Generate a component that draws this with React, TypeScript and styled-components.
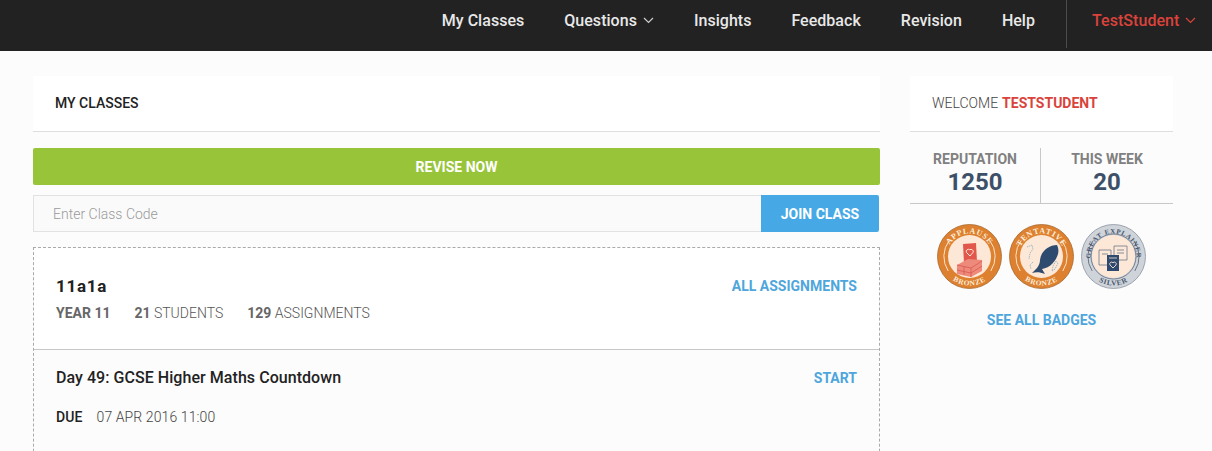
import React from "react";
import styled, { createGlobalStyle } from "styled-components";

const Global = createGlobalStyle`
  html, body { margin: 0; padding: 0; background: #fcfcfc; height: 451px; overflow: hidden; }
  body { font-family: Roboto, "Liberation Sans", sans-serif; color: #222; }
  * { box-sizing: border-box; }
`;

const NavBar = styled.header`
  height: 51px;
  background: #222222;
  display: flex;
  justify-content: flex-end;
  align-items: stretch;
  padding-bottom: 3px;
`;
const NavLinks = styled.nav`
  display: flex;
  align-items: center;
  gap: 40px;
  padding: 0 31px 8px 0;
`;
const NavLink = styled.a`
  font-size: 16px;
  font-weight: 500;
  letter-spacing: 0.03px;
  color: #e8e8e8;
  display: flex;
  align-items: center;
  gap: 6px;
`;
const UserMenu = styled.a`
  border-left: 1px solid #4c4c4c;
  width: 146px;
  padding: 0 0 8px 25px;
  display: flex;
  align-items: center;
  gap: 6px;
  font-size: 16px;
  font-weight: 500;
  letter-spacing: 0.05px;
  color: #d9433b;
`;
const Main = styled.main`
  display: flex;
  align-items: flex-start;
  gap: 30px;
  padding: 25px 39px 0 33px;
`;
const LeftColumn = styled.section`
  width: 847px;
  flex: none;
`;
const RightColumn = styled.aside`
  width: 263px;
  flex: none;
`;
const PanelHead = styled.div`
  height: 56px;
  background: #fff;
  border-bottom: 1px solid #dedede;
  display: flex;
  align-items: center;
  padding: 0 22px 1px;
  font-size: 14px;
  font-weight: 500;
  color: #222;
`;
const ReviseButton = styled.button`
  display: block;
  width: 100%;
  height: 37px;
  margin-top: 16px;
  border: 0;
  border-radius: 2px;
  background: #98c43a;
  color: #fff;
  font: 700 14px Roboto, sans-serif;
`;
const JoinRow = styled.div`
  display: flex;
  height: 37px;
  margin-top: 10px;
  width: 846px;
`;
const CodeInput = styled.div`
  flex: 1;
  border: 1px solid #e2e2e2;
  border-right: 0;
  background: #fafafa;
  color: #9a9a9a;
  font-size: 14px;
  font-weight: 300;
  display: flex;
  align-items: center;
  padding-left: 19px;
`;
const JoinButton = styled.button`
  width: 118px;
  border: 0;
  border-radius: 0 2px 2px 0;
  background: #46a9e6;
  color: #fff;
  font: 700 14px Roboto, sans-serif;
`;
const ClassBox = styled.div`
  margin-top: 15px;
  height: 240px;
  border: 1px dashed #aaa;
  border-bottom: 0;
`;
const ClassHead = styled.div`
  height: 102px;
  background: #fff;
  border-bottom: 1px solid #c8c8c8;
  padding: 27px 22px 0;
`;
const SpreadRow = styled.div`
  display: flex;
  justify-content: space-between;
  align-items: center;
`;
const ClassName = styled.div`
  font-size: 17px;
  font-weight: 700;
  letter-spacing: 0.7px;
  color: #222;
  line-height: 22px;
`;
const TextLink = styled.a`
  font-size: 14px;
  font-weight: 700;
  color: #4ea6dc;
`;
const MetaRow = styled.div`
  display: flex;
  gap: 24px;
  margin-top: 7px;
  font-size: 14px;
  font-weight: 300;
  color: #555;
  line-height: 18px;
`;
const MetaStrong = styled.strong`
  font-weight: 700;
  color: #666;
`;
const AssignmentRow = styled.div`
  padding: 17px 22px 0;
`;
const AssignmentTitle = styled.div`
  font-size: 16px;
  font-weight: 500;
  letter-spacing: 0.05px;
  color: #222;
  line-height: 22px;
`;
const DueRow = styled.div`
  display: flex;
  gap: 14px;
  margin-top: 19px;
  font-size: 14px;
  font-weight: 300;
  letter-spacing: 0.1px;
  color: #444;
  line-height: 18px;
`;
const DueLabel = styled.strong`
  font-weight: 500;
  color: #222;
`;
const WelcomeHead = styled(PanelHead)`
  font-weight: 300;
  color: #444;
  gap: 4px;
`;
const WelcomeName = styled.strong`
  font-weight: 700;
  color: #d9433b;
`;
const Stats = styled.div`
  display: grid;
  grid-template-columns: 131px 1fr;
  margin-top: 16px;
  border-bottom: 1px solid #c8c8c8;
  height: 56px;
`;
const Stat = styled.div<{ $divided?: boolean }>`
  text-align: center;
  border-right: ${(p) => (p.$divided ? "1px solid #c8c8c8" : "0")};
`;
const StatLabel = styled.div`
  font-size: 14px;
  font-weight: 700;
  color: #808080;
  line-height: 20px;
  margin-top: 1px;
`;
const StatValue = styled.div`
  font-size: 24px;
  font-weight: 700;
  color: #3d5068;
  line-height: 26px;
`;
const Badges = styled.div`
  display: flex;
  gap: 7px;
  margin-top: 20px;
  padding-left: 27px;
`;
const SeeAll = styled(TextLink)`
  display: block;
  text-align: center;
  margin-top: 22px;
  line-height: 18px;
`;
const BadgeText = styled.text<{ $size: number }>`
  font-family: "Liberation Serif", "DejaVu Serif", serif;
  font-weight: 700;
  font-size: ${(p) => p.$size}px;
  letter-spacing: 0.7px;
`;

const Chevron = ({ color }: { color: string }) => (
  <svg width="11" height="7" viewBox="0 0 11 7" fill="none">
    <path d="M1 1l4.500 4.500L10 1" stroke={color} strokeWidth="1.2" />
  </svg>
);

type BadgeProps = {
  id: string;
  ring: string;
  edge: string;
  line: string;
  textColor: string;
  top: string;
  bottom: string;
  topSize?: number;
  children: React.ReactNode;
};

const Badge = ({ id, ring, edge, line, textColor, top, bottom, topSize = 8, children }: BadgeProps) => (
  <svg width="65" height="65" viewBox="0 0 65 65">
    <defs>
      <path id={`${id}-t`} d="M12.600 44a23 23 0 1 1 39.800 0" />
      <path id={`${id}-b`} d="M3.500 32.500a29 29 0 0 0 58 0" />
    </defs>
    <circle cx="32.500" cy="32.500" r="32" fill={ring} stroke={edge} strokeWidth="0.8" />
    <path d="M12.200 16.500a26.500 26.500 0 0 0 -1 30.500M52.800 16.500a26.500 26.500 0 0 1 1 30.500" fill="none" stroke={line} strokeWidth="0.9" />
    <circle cx="32.500" cy="32.500" r="21.500" fill="#fde7d6" />
    <BadgeText $size={topSize} fill={textColor}>
      <textPath href={`#${id}-t`} startOffset="50%" textAnchor="middle">{top}</textPath>
    </BadgeText>
    <BadgeText $size={7.4} fill={textColor}>
      <textPath href={`#${id}-b`} startOffset="50%" textAnchor="middle">{bottom}</textPath>
    </BadgeText>
    {children}
  </svg>
);

export default function App() {
  return (
    <>
      <Global />
      <NavBar>
        <NavLinks>
          <NavLink>My Classes</NavLink>
          <NavLink>Questions <Chevron color="#cfcfcf" /></NavLink>
          <NavLink>Insights</NavLink>
          <NavLink>Feedback</NavLink>
          <NavLink>Revision</NavLink>
          <NavLink>Help</NavLink>
        </NavLinks>
        <UserMenu>TestStudent <Chevron color="#d9433b" /></UserMenu>
      </NavBar>
      <Main>
        <LeftColumn>
          <PanelHead>MY CLASSES</PanelHead>
          <ReviseButton>REVISE NOW</ReviseButton>
          <JoinRow>
            <CodeInput>Enter Class Code</CodeInput>
            <JoinButton>JOIN CLASS</JoinButton>
          </JoinRow>
          <ClassBox>
            <ClassHead>
              <SpreadRow>
                <ClassName>11a1a</ClassName>
                <TextLink>ALL ASSIGNMENTS</TextLink>
              </SpreadRow>
              <MetaRow>
                <MetaStrong>YEAR 11</MetaStrong>
                <span><MetaStrong>21</MetaStrong> STUDENTS</span>
                <span><MetaStrong>129</MetaStrong> ASSIGNMENTS</span>
              </MetaRow>
            </ClassHead>
            <AssignmentRow>
              <SpreadRow>
                <AssignmentTitle>Day 49: GCSE Higher Maths Countdown</AssignmentTitle>
                <TextLink>START</TextLink>
              </SpreadRow>
              <DueRow>
                <DueLabel>DUE</DueLabel>
                <span>07 APR 2016 11:00</span>
              </DueRow>
            </AssignmentRow>
          </ClassBox>
        </LeftColumn>
        <RightColumn>
          <WelcomeHead>WELCOME <WelcomeName>TESTSTUDENT</WelcomeName></WelcomeHead>
          <Stats>
            <Stat $divided>
              <StatLabel>REPUTATION</StatLabel>
              <StatValue>1250</StatValue>
            </Stat>
            <Stat>
              <StatLabel>THIS WEEK</StatLabel>
              <StatValue>20</StatValue>
            </Stat>
          </Stats>
          <Badges>
            <Badge id="a" ring="#dd8130" edge="#a86a30" line="#fdeedd" textColor="#fdeedd" top="APPLAUSE" bottom="BRONZE">
              <path d="M26 20l13-1 1 19-13 1z" fill="#e2574c" />
              <path d="M33 32l-3.600-3.600a2.200 2.200 0 0 1 3.400-2.600 2.200 2.200 0 0 1 3.400 2.400z" fill="none" stroke="#fde7d6" strokeWidth="1" />
              <path d="M20 41l11-6 14 1v11l-11 6-14-3z" fill="#ee8a7c" />
              <path d="M20 41l14 3 11-7M34 44v9M20 46l14 3M27 43v8M45 42l-11 7" fill="none" stroke="#d9584d" strokeWidth="0.8" />
            </Badge>
            <Badge id="b" ring="#dd8130" edge="#a86a30" line="#fdeedd" textColor="#fdeedd" top="TENTATIVE" bottom="BRONZE">
              <path d="M48 21C40 21 32 27 31 36c0 3-1 5-3 8l-5 5c4-1 8-1 13 1l-3-5c8-1 14-8 16-15 1-4 0-7-1-9z" fill="#2e4a6e" />
              <path d="M18 23l5-2 1 4-3 4-1 6M24 38l-3 3 1 4M47 37l-3 5-1 5 3-2 3-6-2-2z" fill="none" stroke="#8fb4c6" strokeWidth="0.9" strokeDasharray="1.400 0.800" />
            </Badge>
            <Badge id="c" ring="#cfd3da" edge="#8b93a0" line="#5f6c80" textColor="#46566c" top="GREAT EXPLAINER" bottom="SILVER" topSize={6.8}>
              <circle cx="32.500" cy="32.500" r="22.500" fill="none" stroke="#5f6c80" strokeWidth="0.8" />
              <path d="M18 26h12v15H18zM33 22h13v14H33z" fill="#fde7d6" stroke="#7a8494" strokeWidth="0.9" />
              <path d="M21 30h6M36 26h7M36 29h7" stroke="#7a8494" strokeWidth="0.9" />
              <path d="M26 31h12v16H26z" fill="#2e4a6e" />
              <path d="M32 44l-3-3a1.900 1.900 0 0 1 3-2.300 1.900 1.900 0 0 1 3 2.300z" fill="none" stroke="#fde7d6" strokeWidth="0.9" />
              <path d="M28 34h8" stroke="#fde7d6" strokeWidth="0.8" />
            </Badge>
          </Badges>
          <SeeAll>SEE ALL BADGES</SeeAll>
        </RightColumn>
      </Main>
    </>
  );
}
